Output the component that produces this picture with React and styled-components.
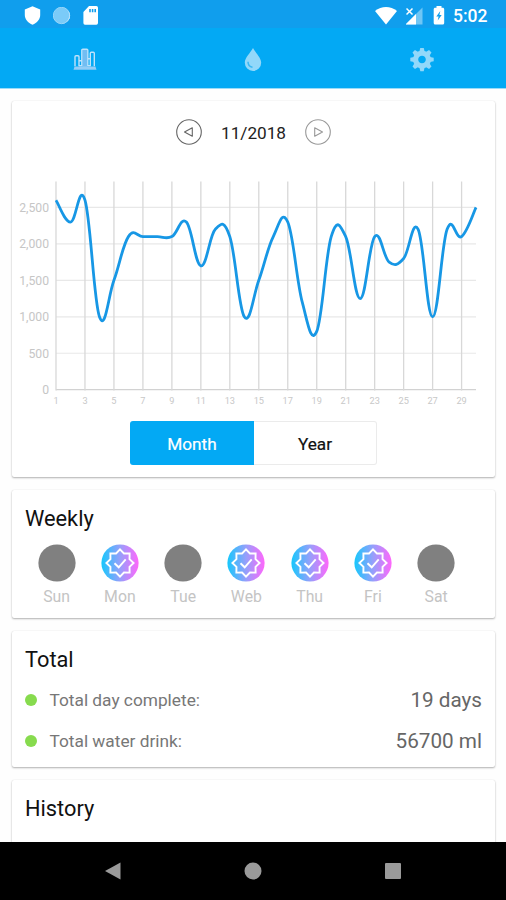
import React from "react";
import styled, { createGlobalStyle } from "styled-components";

const GlobalStyle = createGlobalStyle`
  * { box-sizing: border-box; }
  html, body { margin: 0; padding: 0; }
  body { background: #fefefe; font-family: Roboto, "Noto Sans", sans-serif; color: #111; overflow: hidden; }
`;

const Screen = styled.div`
  width: 506px;
  height: 900px;
  display: flex;
  flex-direction: column;
  overflow: hidden;
  background: #fefefe;
`;

const StatusBar = styled.div`
  height: 28px;
  flex: none;
  display: flex;
  align-items: center;
  justify-content: space-between;
  padding: 3px 18.5px 0 24px;
  background: #109eed;
`;

const StatusGroup = styled.div`
  display: flex;
  align-items: center;
  gap: ${(p) => p.$gap}px;
`;

const Clock = styled.span`
  margin-left: -1px;
  font-size: 17.5px;
  font-weight: 500;
  line-height: 20px;
  color: #fff;
`;

const TabBar = styled.nav`
  height: 60px;
  flex: none;
  display: grid;
  grid-template-columns: repeat(3, 1fr);
  padding-left: 1px;
  background: #03a9f4;
  box-shadow: 0 1px 0 #9bdcf9;
`;

const Tab = styled.button`
  display: flex;
  align-items: center;
  justify-content: center;
  padding: 3px 0 0;
  border: 0;
  background: none;
`;

const Content = styled.main`
  flex: 1;
  min-height: 0;
  overflow: hidden;
  display: flex;
  flex-direction: column;
  gap: 13px;
  padding: 13px 11px 0 12px;
`;

const Card = styled.section`
  flex: none;
  height: ${(p) => p.$height}px;
  padding: ${(p) => (p.$flush ? "0" : "0 13px")};
  border-radius: 2px;
  background: #fff;
  box-shadow: 0 1px 2px rgba(0, 0, 0, 0.3), 0 0 1px rgba(0, 0, 0, 0.12);
`;

const MonthPicker = styled.div`
  height: 62px;
  display: flex;
  align-items: center;
  justify-content: center;
  gap: 18.5px;
`;

const RoundButton = styled.button`
  width: 26px;
  height: 26px;
  padding: 0;
  border: 0;
  background: none;
  display: block;
  color: ${(p) => (p.$muted ? "#999" : "#666")};
`;

const MonthLabel = styled.span`
  font-size: 17.2px;
  line-height: 24px;
  color: #222;
  padding-top: 1px;
`;

const Plot = styled.svg`
  display: block;
  width: 483px;
  height: 254px;
`;

const Toggle = styled.div`
  width: 247px;
  height: 44px;
  margin: 4px 0 0 118px;
  display: flex;
`;

const Segment = styled.button`
  flex: none;
  width: ${(p) => (p.$active ? 124 : 123)}px;
  height: 44px;
  padding: 1px 0 0;
  border: ${(p) => (p.$active ? "0" : "1px solid #ebebeb")};
  border-left: 0;
  border-radius: ${(p) => (p.$active ? "3px 0 0 3px" : "0 3px 3px 0")};
  font: 400 17.2px Roboto, sans-serif;
  color: ${(p) => (p.$active ? "#fff" : "#111")};
  -webkit-text-stroke: 0.2px currentColor;
  background: ${(p) => (p.$active ? "#03a9f4" : "transparent")};
`;

const Title = styled.h2`
  margin: 0;
  padding-top: 15px;
  font-size: 21.8px;
  line-height: 27px;
  font-weight: 400;
  color: #111;
`;

const Week = styled.div`
  display: grid;
  grid-template-columns: repeat(7, 63.25px);
  margin: 12px 0 0;
`;

const Day = styled.div`
  display: flex;
  flex-direction: column;
  align-items: center;
  gap: 4px;
`;

const DayName = styled.span`
  font-size: 15.8px;
  line-height: 22px;
  color: #c4c4c4;
`;

const Row = styled.div`
  height: 41px;
  display: flex;
  align-items: center;
`;

const Rows = styled.div`
  padding-top: 6px;
`;

const Dot = styled.span`
  width: 12px;
  height: 12px;
  border-radius: 50%;
  background: #87db4e;
`;

const RowLabel = styled.span`
  margin-left: 12.5px;
  padding-top: 1px;
  flex: 1;
  font-size: 17.3px;
  color: #777;
`;

const RowValue = styled.span`
  font-size: 20.7px;
  padding-top: 1px;
  color: #666;
`;

const NavBar = styled.footer`
  height: 58px;
  flex: none;
  display: flex;
  justify-content: center;
  align-items: center;
  gap: 122px;
  background: #000;
`;

const ShieldIcon = () => (
  <svg width="17" height="19" viewBox="0 0 17 19">
    <path d="M8.5.3 16.200 3.500V9c0 4.300-3.200 7.800-7.700 9.700C4 16.800.8 13.300.8 9V3.500Z" fill="#fff" />
  </svg>
);

const SyncIcon = () => (
  <svg width="18" height="18" viewBox="0.5 0.5 18 18">
    <circle cx="9" cy="9" r="8.300" fill="#7bcbf8" />
    <path d="M15 3.500A8.300 8.300 0 0 1 5 16.300 8.700 8.700 0 0 0 17 12 8.500 8.500 0 0 0 15 3.500Z" fill="#fff" />
    <circle cx="9" cy="9" r="8.200" fill="none" stroke="#a8dcfa" strokeWidth=".8" />
    <circle cx="8.500" cy="8.500" r="7.200" fill="#7bcbf8" />
  </svg>
);

const SdIcon = () => (
  <svg width="16" height="19" viewBox="0 0 16 19">
    <path fillRule="evenodd" fill="#fff" d="M6 0h7.300A1.700 1.700 0 0 1 15 1.700v15.300a1.700 1.700 0 0 1-1.700 1.700H2A1.700 1.700 0 0 1 .4 17V6ZM6.200 3v3.200h1.600V3Zm2.600 0v3.200h1.600V3Zm2.600 0v3.200H13V3Z" />
  </svg>
);

const WifiIcon = () => (
  <svg width="22" height="18" viewBox="0 0 22 18">
    <path d="M0 4C6.500-1.300 15.500-1.300 22 4L11 17.600Z" fill="#fff" />
  </svg>
);

const SignalIcon = () => (
  <svg width="18" height="18" viewBox="1 0 18 18">
    <path d="M17.500.5V17.500H.5Z" fill="#6fc6f5" />
    <path d="M11 7V17.500H.5Z" fill="#fff" />
    <path d="M0 0H9V8H0Z" fill="#109eed" />
    <path d="m1.500 1.500 6 6m0-6-6 6" stroke="#fff" strokeWidth="1.500" />
  </svg>
);

const BatteryIcon = () => (
  <svg width="12" height="19" viewBox="0 0 12 19">
    <path d="M3.500 0h5v1.800h1.200c.9 0 1.500.6 1.500 1.500v13.700c0 .9-.6 1.500-1.500 1.500H2.200c-.9 0-1.500-.6-1.500-1.500V3.300c0-.9.6-1.500 1.500-1.500h1.300Z" fill="#fff" />
    <path d="M7.300 5 3.300 10.500h2.300l-.9 4L8.700 9H6.400Z" fill="#109eed" />
  </svg>
);

const ChartIcon = () => (
  <svg width="26" height="24" viewBox="0 0.7 26 24">
    <rect x="10.300" y="2" width="5" height="18" fill="#72bdf2" />
    <path d="M3 19V9.500q0-1 1-1h2q1 0 1 1V19M9.800 19V3q0-1 1-1h4q1 0 1 1V19M18.300 19V6q0-1 1-1h2q1 0 1 1V19M9.800 13.500H7.500M15.800 11.500h2.500M7 18.500h3M15.500 18.500h3" fill="none" stroke="#bfe2fb" strokeWidth="1.400" />
    <path d="M2.500 19.300h21l1 3.200h-23Z" fill="#93cdf6" />
  </svg>
);

const DropIcon = () => (
  <svg width="18" height="24" viewBox="0 0.7 18 24">
    <path d="M9 .8C6.500 5.500.8 10.500.8 15.500a8.200 8.200 0 0 0 16.400 0C17.200 10.500 11.500 5.500 9 .8Z" fill="#92d8fa" />
    <path d="M4 14.500c0 3.200 1.700 5 4.500 5.500" fill="none" stroke="#38b7f4" strokeWidth="1.500" />
  </svg>
);

const TEETH = [0, 45, 90, 135, 180, 225, 270, 315];

const GearIcon = () => (
  <svg width="24" height="24" viewBox="-12 -11.500 24 24">
    {TEETH.map((a) => (
      <path key={a} d="M-2.600-8-1.700-11.700H1.700L2.600-8Z" fill="#92d8fa" transform={`rotate(${a})`} />
    ))}
    <circle r="6.400" fill="none" stroke="#92d8fa" strokeWidth="5.200" />
  </svg>
);

const ArrowIcon = ({ flip }) => (
  <svg width="26" height="26" viewBox="-13 -13 26 26">
    <circle r="12.300" fill="none" stroke="currentColor" strokeWidth="1.100" />
    <path
      d="M-4.500 0 3.300-4.200V4.200Z"
      transform={flip ? "scale(-1 1)" : undefined}
      fill="none"
      stroke="currentColor"
      strokeWidth="1.100"
      strokeLinejoin="round"
    />
  </svg>
);

const starPoints = Array.from({ length: 16 }, (_, i) => {
  const r = i % 2 ? 10.3 : 13.6;
  const a = (i * Math.PI) / 8;
  return `${(r * Math.sin(a)).toFixed(2)},${(-r * Math.cos(a)).toFixed(2)}`;
}).join(" ");

const DayBadge = ({ done, id }) => (
  <svg width="38" height="38" viewBox="-19 -19 38 38">
    <defs>
      <linearGradient id={id} x1="0" x2="1">
        <stop offset="0" stopColor="#16c8fc" />
        <stop offset=".5" stopColor="#969ffb" />
        <stop offset="1" stopColor="#ff67fb" />
      </linearGradient>
    </defs>
    <circle r="18.600" fill={done ? `url(#${id})` : "#808080"} />
    {done && (
      <g fill="none" stroke="#fff" strokeWidth="1.900">
        <polygon points={starPoints} />
        <path d="M-5.500.3-1.300 4.300 5.700-3.700" />
      </g>
    )}
  </svg>
);

const VALUES = [
  2600, 2300, 2600, 1000, 1500, 2100, 2100, 2100, 2100, 2300,
  1700, 2200, 2100, 1000, 1500, 2100, 2300, 1200, 800, 2100,
  2100, 1250, 2100, 1750, 1800, 2200, 1000, 2200, 2100, 2500,
];

const px = (i) => 44 + i * 14.485;
const py = (v) => 226.7 - v * 0.0729;

const SMOOTHING = 0.2;

function curvePath(values) {
  const idx = (i) => Math.max(0, Math.min(values.length - 1, i));
  const at = (i) => values[idx(i)];
  let d = `M${px(0)} ${py(values[0])}`;
  for (let i = 1; i < values.length; i++) {
    const x1 = px(i - 1) + (px(i) - px(idx(i - 2))) * SMOOTHING;
    const y1 = py(at(i - 1) + (at(i) - at(i - 2)) * SMOOTHING);
    const x2 = px(i) - (px(idx(i + 1)) - px(i - 1)) * SMOOTHING;
    const y2 = py(at(i) - (at(i + 1) - at(i - 1)) * SMOOTHING);
    d += `C${x1} ${y1} ${x2} ${y2} ${px(i)} ${py(at(i))}`;
  }
  return d;
}

const WaterChart = () => (
  <Plot viewBox="0 0 483 254">
    {[0, 500, 1000, 1500, 2000, 2500].map((v) => (
      <g key={v}>
        <path d={`M44 ${py(v)}H464`} stroke={v ? "#e8e8e8" : "#d2d2d2"} strokeWidth="1.200" />
        <text x="37" y={py(v) + 4.3} textAnchor="end" fontSize="12.200" fill="#c6c6c6">
          {v.toLocaleString("en-US")}
        </text>
      </g>
    ))}
    {Array.from({ length: 15 }, (_, i) => (
      <g key={i}>
        <path d={`M${px(i * 2)} 18.500V227.500`} stroke="#d8d8d8" strokeWidth="1.300" />
        <text x={px(i * 2)} y="241.200" textAnchor="middle" fontSize="9.200" fill="#c8c8c8">
          {i * 2 + 1}
        </text>
      </g>
    ))}
    <path d={curvePath(VALUES)} fill="none" stroke="#1797e5" strokeWidth="2.800" />
  </Plot>
);

const WEEK = [
  ["Sun", false],
  ["Mon", true],
  ["Tue", false],
  ["Web", true],
  ["Thu", true],
  ["Fri", true],
  ["Sat", false],
];

const TOTALS = [
  ["Total day complete:", "19 days"],
  ["Total water drink:", "56700 ml"],
];

export default function App() {
  return (
    <Screen>
      <GlobalStyle />
      <StatusBar>
        <StatusGroup $gap={12}>
          <ShieldIcon />
          <SyncIcon />
          <SdIcon />
        </StatusGroup>
        <StatusGroup $gap={9}>
          <WifiIcon />
          <SignalIcon />
          <BatteryIcon />
          <Clock>5:02</Clock>
        </StatusGroup>
      </StatusBar>
      <TabBar>
        <Tab aria-label="Statistics"><ChartIcon /></Tab>
        <Tab aria-label="Water"><DropIcon /></Tab>
        <Tab aria-label="Settings"><GearIcon /></Tab>
      </TabBar>
      <Content>
        <Card $height={376} $flush>
          <MonthPicker>
            <RoundButton aria-label="Previous month"><ArrowIcon /></RoundButton>
            <MonthLabel>11/2018</MonthLabel>
            <RoundButton aria-label="Next month" $muted><ArrowIcon flip /></RoundButton>
          </MonthPicker>
          <WaterChart />
          <Toggle>
            <Segment $active>Month</Segment>
            <Segment>Year</Segment>
          </Toggle>
        </Card>
        <Card $height={128}>
          <Title>Weekly</Title>
          <Week>
            {WEEK.map(([name, done]) => (
              <Day key={name}>
                <DayBadge done={done} id={`badge-${name}`} />
                <DayName>{name}</DayName>
              </Day>
            ))}
          </Week>
        </Card>
        <Card $height={136}>
          <Title>Total</Title>
          <Rows>
            {TOTALS.map(([label, value]) => (
              <Row key={label}>
                <Dot />
                <RowLabel>{label}</RowLabel>
                <RowValue>{value}</RowValue>
              </Row>
            ))}
          </Rows>
        </Card>
        <Card $height={100}>
          <Title>History</Title>
        </Card>
      </Content>
      <NavBar>
        <svg width="18" height="18" viewBox="0 0 18 18"><path d="M1 9 16.500.500V17.500Z" fill="#9a9a9a" /></svg>
        <svg width="18" height="18" viewBox="0 0 18 18"><circle cx="9" cy="9" r="8.500" fill="#9a9a9a" /></svg>
        <svg width="18" height="18" viewBox="0 0 18 18"><rect x="1" y="1" width="16" height="16" rx="1" fill="#9a9a9a" /></svg>
      </NavBar>
    </Screen>
  );
}
